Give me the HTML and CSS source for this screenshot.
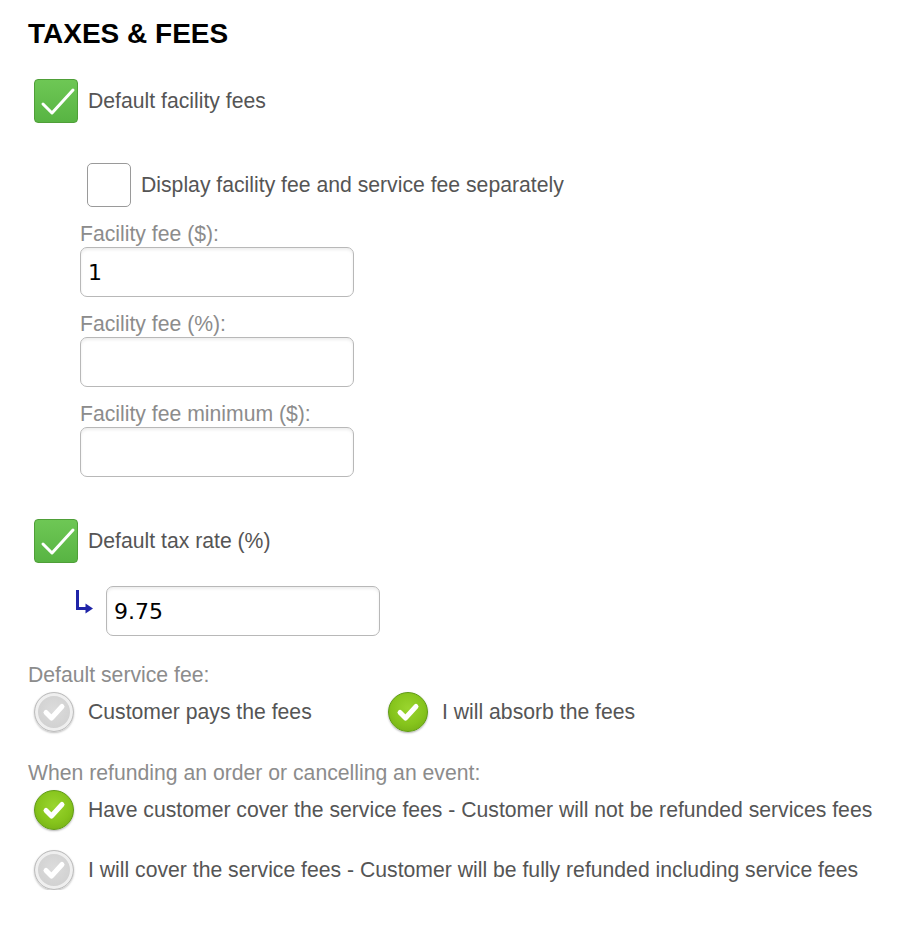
FILE: index.html
```html
<!DOCTYPE html>
<html>
<head>
<meta charset="utf-8" />
<title>Taxes &amp; Fees</title>
<link rel="stylesheet" href="styles.css">
</head>
<body>
<div id="wrap">

	<h1>TAXES &amp; FEES</h1>

	<!-- 시설 수수료 -->
	<div class="chk_row first">
		<span class="chk on">
			<svg width="42" height="42" viewBox="0 0 42 42"><path d="M8 24 L17 33 L38 10" fill="none" stroke="#fff" stroke-width="3" stroke-linecap="round" stroke-linejoin="round"/></svg>
		</span>
		Default facility fees
	</div>

	<div class="sub">
		<div class="chk_row">
			<span class="chk off"></span>
			Display facility fee and service fee separately
		</div>

		<p class="fld_lbl">Facility fee ($):</p>
		<input class="fld" type="text" value="1" />

		<p class="fld_lbl">Facility fee (%):</p>
		<input class="fld" type="text" value="" />

		<p class="fld_lbl">Facility fee minimum ($):</p>
		<input class="fld" type="text" value="" />
	</div>

	<!-- 세금 -->
	<div class="chk_row tax">
		<span class="chk on">
			<svg width="42" height="42" viewBox="0 0 42 42"><path d="M8 24 L17 33 L38 10" fill="none" stroke="#fff" stroke-width="3" stroke-linecap="round" stroke-linejoin="round"/></svg>
		</span>
		Default tax rate (%)
	</div>

	<div class="tax_row">
		<svg class="arrow" width="18" height="24" viewBox="0 0 18 24"><path d="M2.5 0 V18.5 H12" fill="none" stroke="#1f24a8" stroke-width="3"/><path d="M10.5 13.5 L18 18.5 L10.5 23.5 Z" fill="#1f24a8"/></svg>
		<input class="fld" type="text" value="9.75" />
	</div>

	<!-- 서비스 수수료 -->
	<p class="grp_lbl">Default service fee:</p>
	<div class="opt_row first">
		<div class="opt wide">
			<span class="radio off"><svg width="38" height="38" viewBox="0 0 38 38"><path d="M11 19.5 L16.5 25 L27 13.5" fill="none" stroke="#fff" stroke-width="5" stroke-linecap="round" stroke-linejoin="round"/></svg></span>
			Customer pays the fees
		</div>
		<div class="opt">
			<span class="radio on"><svg width="38" height="38" viewBox="0 0 38 38"><path d="M11 19.5 L16.5 25 L27 13.5" fill="none" stroke="#fff" stroke-width="5" stroke-linecap="round" stroke-linejoin="round"/></svg></span>
			I will absorb the fees
		</div>
	</div>

	<p class="grp_lbl refund">When refunding an order or cancelling an event:</p>
	<div class="opt_row first">
		<div class="opt">
			<span class="radio on"><svg width="38" height="38" viewBox="0 0 38 38"><path d="M11 19.5 L16.5 25 L27 13.5" fill="none" stroke="#fff" stroke-width="5" stroke-linecap="round" stroke-linejoin="round"/></svg></span>
			Have customer cover the service fees - Customer will not be refunded services fees
		</div>
	</div>
	<div class="opt_row second">
		<div class="opt">
			<span class="radio off"><svg width="38" height="38" viewBox="0 0 38 38"><path d="M11 19.5 L16.5 25 L27 13.5" fill="none" stroke="#fff" stroke-width="5" stroke-linecap="round" stroke-linejoin="round"/></svg></span>
			I will cover the service fees - Customer will be fully refunded including service fees
		</div>
	</div>

</div>
</body>
</html>
```

FILE: styles.css
```css
	/** 공통 **/
	*{margin:0; padding:0;}
	body{background:#fff; font-family:"Liberation Sans", Arial, sans-serif;}
	#wrap{padding:18px 0 0 28px;}

	h1{font-size:28px; line-height:32px; font-weight:bold; color:#000;}

	/* 체크박스 */
	.chk_row{display:flex; align-items:center; font-size:21.2px; line-height:24px; color:#555;}
	.chk_row.first{margin-top:29px; padding-left:6px;}
	.chk_row.tax{margin-top:42px; padding-left:6px;}
	.chk{display:flex; align-items:center; justify-content:center; width:44px; height:44px; box-sizing:border-box; margin-right:10px; flex:none;}
	.chk.on{border:1px solid #4f9f38; border-radius:4px; background:linear-gradient(#6ec755, #58b443);}
	.chk.off{border:1.5px solid #9a9a9a; border-radius:5px; background:#fff;}

	/* 시설 수수료 입력 */
	.sub{margin-top:40px; padding-left:52px;}
	.sub .chk_row{padding-left:7px;}
	.fld_lbl{margin:15px 0 1px 0; font-size:21.2px; line-height:24px; color:#8c8c8c;}
	.fld{
		display:block;
		width:274px;
		height:50px;
		box-sizing:border-box;
		padding:0 7px;
		border:1.5px solid #b8b8b8;
		border-radius:7px;
		background:#fff;
		box-shadow:inset 0 2px 3px rgba(0,0,0,0.07);
		font-family:"DejaVu Sans", sans-serif;
		font-size:22px;
		color:#000;
		outline:none;
	}

	.tax_row{display:flex; align-items:flex-start; margin-top:23px; padding-left:47px;}
	.tax_row .arrow{flex:none; margin:4px 13px 0 0;}

	/* 라디오 */
	.grp_lbl{margin-top:27px; font-size:21.2px; line-height:24px; color:#8c8c8c;}
	.grp_lbl.refund{margin-top:29px;}
	.opt_row{display:flex; padding-left:6px;}
	.opt_row.first{margin-top:5px;}
	.opt_row.second{margin-top:20px;}
	.opt{display:flex; align-items:center; font-size:21.2px; line-height:24px; color:#555; white-space:nowrap;}
	.opt.wide{width:354px;}
	.radio{display:flex; align-items:center; justify-content:center; width:40px; height:40px; box-sizing:border-box; margin-right:14px; border-radius:50%; flex:none;}
	.radio.on{
		border:1px solid #5f9a16;
		background:radial-gradient(circle at 50% 40%, #9ad52e 0%, #86c41c 55%, #6ea813 100%);
		box-shadow:0 1px 2px rgba(0,0,0,0.3);
	}
	.radio.off{
		border:1px solid #bdbdbd;
		background:radial-gradient(circle at 50% 45%, #dcdcdc 0%, #d2d2d2 60%, #c6c6c6 100%);
		box-shadow:inset 0 0 0 3px #efefef, 0 1px 2px rgba(0,0,0,0.25);
	}
```
